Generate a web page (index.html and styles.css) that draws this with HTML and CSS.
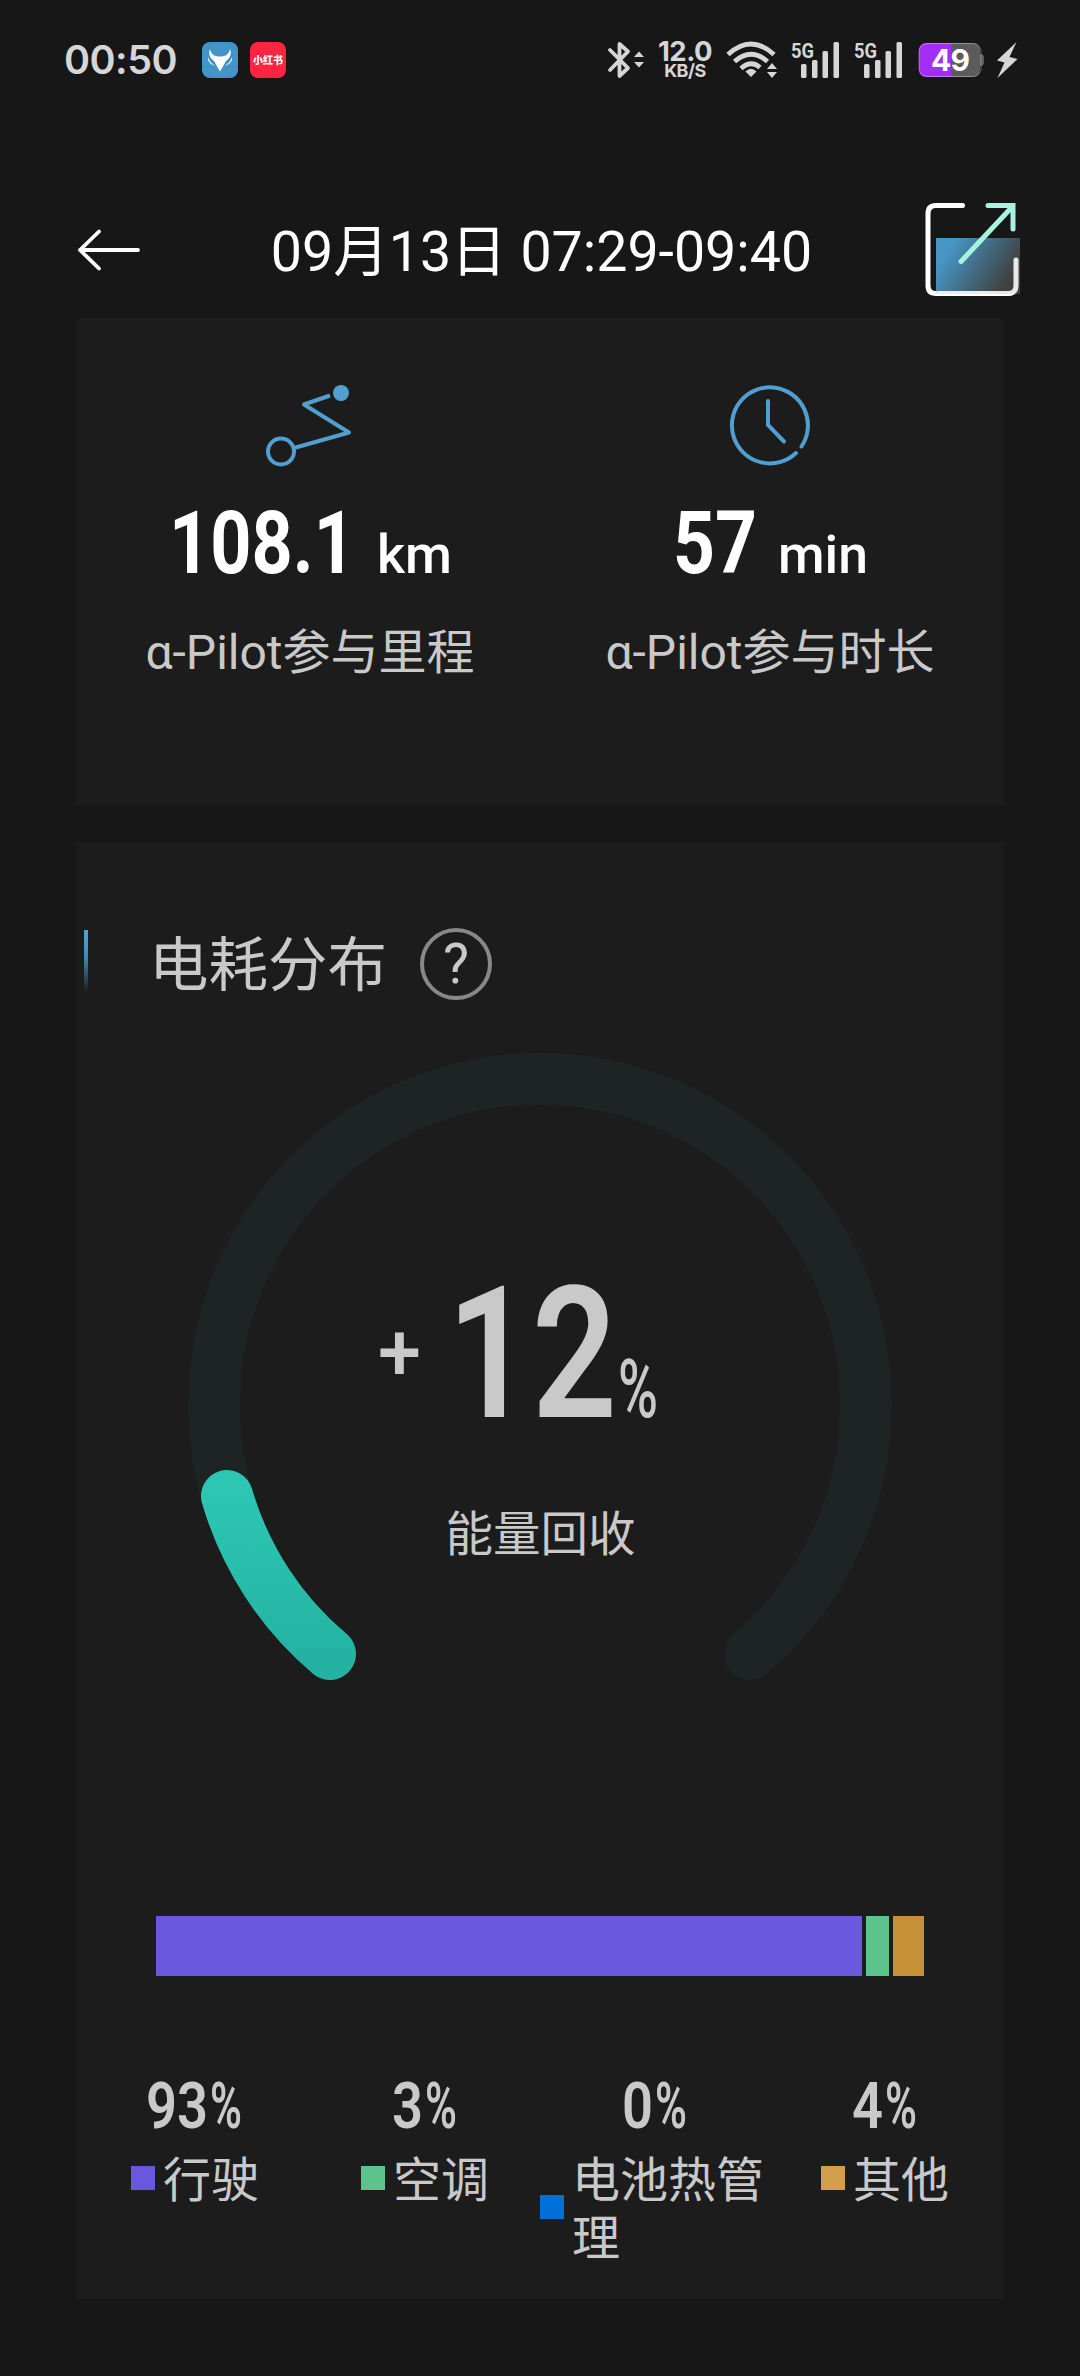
FILE: index.html
```html
<!DOCTYPE html>
<html lang="zh-CN">
<head>
<meta charset="utf-8">
<title>行程能耗</title>
<link rel="stylesheet" href="styles.css">
</head>
<body>
<div class="screen">
  <div class="status">
    <span class="clock">00:50</span>
    <svg class="app-icon" width="36" height="36" viewBox="0 0 36 36">
      <rect width="36" height="36" rx="8" fill="#4394c8"/>
      <path d="M8 7C9 12 12 14.500 18 14.500C24 14.500 27 12 28 7C30 12 28 16 24 19L18 29.500L12 19C8 16 6 12 8 7Z" fill="#fff"/>
      <path d="M6 15Q7 20 13 23.500Q8 22.500 6 18ZM30 15Q29 20 23 23.500Q28 22.500 30 18Z" fill="#fff"/>
    </svg>
    <span class="app-icon red">小红书</span>
    <div class="status-right">
      <svg class="bt" width="38" height="40" viewBox="0 0 38 40" fill="none" stroke="#d6d6d6" stroke-width="3.800" stroke-linejoin="round" stroke-linecap="round">
        <path d="M3 10L21 28L12.500 36V4L21 11.500L3 30"/>
        <path d="M27 17L32 11.500L37 17ZM27 22L32 27.500L37 22Z" fill="#d6d6d6" stroke="none"/>
      </svg>
      <span class="speed"><b>12.0</b><small>KB/S</small></span>
      <svg class="wifi" width="52" height="38" viewBox="0 0 52 38" fill="none" stroke="#d6d6d6" stroke-width="4.800">
        <path d="M2 13.500Q25 -7.500 48 13.500M8.500 20.500Q25 6 41.500 20.500M15 27.500Q25 18.500 34 26.500"/>
        <path d="M25 36L19.500 30.500Q25 25 30.500 30.500ZM41 28L46 22L51 28ZM41 31L46 37L51 31Z" fill="#d6d6d6" stroke="none"/>
      </svg>
      <svg class="signal" width="50" height="38" viewBox="0 0 50 38" fill="#d6d6d6">
        <text class="net" x="0" y="16.500" textLength="23" lengthAdjust="spacingAndGlyphs">5G</text>
        <rect x="10" y="23" width="5.500" height="14" rx="1.500"/><rect x="21" y="19" width="5.500" height="18" rx="1.500"/><rect x="31.500" y="10" width="5.500" height="27" rx="1.500"/><rect x="42.500" y="1" width="5.500" height="36" rx="1.500"/>
      </svg>
      <svg class="signal" width="50" height="38" viewBox="0 0 50 38" fill="#d6d6d6">
        <text class="net" x="0" y="16.500" textLength="23" lengthAdjust="spacingAndGlyphs">5G</text>
        <rect x="10" y="23" width="5.500" height="14" rx="1.500"/><rect x="21" y="19" width="5.500" height="18" rx="1.500"/><rect x="31.500" y="10" width="5.500" height="27" rx="1.500"/><rect x="42.500" y="1" width="5.500" height="36" rx="1.500"/>
      </svg>
      <svg class="battery" width="66" height="36" viewBox="0 0 66 36">
        <path d="M9 1H33V35H9Q1 35 1 27V9Q1 1 9 1Z" fill="#a52df8"/>
        <path d="M33 1H54Q62 1 62 9V27Q62 35 54 35H33ZM62 12Q66 12 66 15V21Q66 24 62 24Z" fill="#5b5b5b"/>
        <rect x="1" y="1.500" width="62" height="33" rx="8" fill="none" stroke="#fff" stroke-opacity=".35"/>
        <text class="charge" x="32" y="29" text-anchor="middle">49</text>
      </svg>
      <svg class="bolt" width="22" height="38" viewBox="0 0 22 38"><path d="M20.500 1L1 19.500L8.500 21.500L1.500 37L21.500 18L13.500 16Z" fill="#d6d6d6"/></svg>
    </div>
  </div>

  <div class="header">
    <svg class="back" width="64" height="44" viewBox="0 0 64 44" fill="none" stroke="#fff" stroke-width="3.800" stroke-linecap="round" stroke-linejoin="round"><path d="M61 22H3M22 3.500L3 22L22 40.500"/></svg>
    <h1>09月13日 07:29-09:40</h1>
    <svg class="share" width="96" height="94" viewBox="0 0 96 94" fill="none" stroke-width="5" stroke-linecap="round">
      <defs><linearGradient id="share-fill" x1="0" y1=".3" x2="1" y2=".7"><stop offset=".1" stop-color="#489aca"/><stop offset=".9" stop-color="#424242"/></linearGradient></defs>
      <path d="M37.500 2.500H11Q3 2.500 3 10.500V82.500Q3 90.500 11 90.500H83Q91 90.500 91 82.500V57" stroke="#fff"/>
      <rect x="11" y="35" width="84" height="56" fill="url(#share-fill)" fill-opacity=".96"/>
      <path d="M13 90.500H83Q91 90.500 91 82.500V57" stroke="#fff" stroke-opacity=".88"/>
      <path d="M63 2.500H88V26M87 4L36 58.500" stroke="#a6f3df"/>
    </svg>
  </div>

  <section class="card pilot">
    <div class="metric">
      <svg width="90" height="86" viewBox="0 0 90 86" fill="none" stroke="#509fd0" stroke-width="4">
        <circle cx="16" cy="67.500" r="13"/><path d="M29 64L84 48.500L39 20.500L65 11.500" stroke-linejoin="round"/><circle cx="76" cy="9" r="8" fill="#509fd0" stroke="none"/>
      </svg>
      <svg class="value" width="460" height="90" viewBox="0 0 460 90">
        <text class="din" x="89" y="79" textLength="186" lengthAdjust="spacingAndGlyphs">108.1</text>
        <text class="unit" x="297" y="79" textLength="75" lengthAdjust="spacingAndGlyphs">km</text>
      </svg>
      <span class="label">α-Pilot参与里程</span>
    </div>
    <div class="metric">
      <svg width="90" height="86" viewBox="0 0 90 86" fill="none" stroke="#509fd0" stroke-width="4" stroke-linecap="round">
        <path d="M76.500 62.500A38 38 0 1 0 71 69"/><path d="M43 17V41L59 57.500"/>
      </svg>
      <svg class="value" width="460" height="90" viewBox="0 0 460 90">
        <text class="din" x="133" y="79" textLength="84" lengthAdjust="spacingAndGlyphs">57</text>
        <text class="unit" x="238" y="79" textLength="90" lengthAdjust="spacingAndGlyphs">min</text>
      </svg>
      <span class="label">α-Pilot参与时长</span>
    </div>
  </section>

  <section class="card energy">
    <div class="section-title">
      <i class="tick"></i>
      <h2>电耗分布</h2>
      <span class="help">?</span>
    </div>
    <svg class="gauge" width="720" height="660" viewBox="180 1040 720 660" fill="none" stroke-linecap="round" stroke-width="52">
      <defs><linearGradient id="arc" x1="0" y1="0" x2="0" y2="1"><stop stop-color="#2cc6b3"/><stop offset="1" stop-color="#24b3a3"/></linearGradient></defs>
      <path d="M330 1654A326 326 0 1 1 750 1654" stroke="#1d2423"/>
      <path d="M330 1654A326 326 0 0 1 227 1496" stroke="url(#arc)"/>
      <g fill="#c9c9c9" stroke="none">
        <text class="plus" x="378" y="1380" textLength="43" lengthAdjust="spacingAndGlyphs">+</text>
        <text class="big" x="447" y="1417" textLength="170" lengthAdjust="spacingAndGlyphs">12</text>
        <text class="percent" x="618" y="1417" textLength="40" lengthAdjust="spacingAndGlyphs">%</text>
        <text class="caption" x="540.500" y="1551" text-anchor="middle">能量回收</text>
      </g>
    </svg>
    <div class="bar"><i class="drive" style="width:706px"></i><i class="air" style="width:23px"></i><i class="other" style="width:31px"></i></div>
    <div class="legend">
      <div class="item">
        <svg width="230" height="64" viewBox="0 0 230 64"><text class="pct" x="66" y="56" textLength="62" lengthAdjust="spacingAndGlyphs">93</text><text class="sign" x="130" y="56" textLength="32" lengthAdjust="spacingAndGlyphs">%</text></svg>
        <div class="name"><i class="drive"></i><span>行驶</span></div>
      </div>
      <div class="item">
        <svg width="230" height="64" viewBox="0 0 230 64"><text class="pct" x="82" y="56" textLength="31" lengthAdjust="spacingAndGlyphs">3</text><text class="sign" x="115" y="56" textLength="32" lengthAdjust="spacingAndGlyphs">%</text></svg>
        <div class="name"><i class="air"></i><span>空调</span></div>
      </div>
      <div class="item">
        <svg width="230" height="64" viewBox="0 0 230 64"><text class="pct" x="82" y="56" textLength="31" lengthAdjust="spacingAndGlyphs">0</text><text class="sign" x="115" y="56" textLength="32" lengthAdjust="spacingAndGlyphs">%</text></svg>
        <div class="name"><i class="thermal"></i><span>电池热管理</span></div>
      </div>
      <div class="item">
        <svg width="230" height="64" viewBox="0 0 230 64"><text class="pct" x="82" y="56" textLength="31" lengthAdjust="spacingAndGlyphs">4</text><text class="sign" x="115" y="56" textLength="32" lengthAdjust="spacingAndGlyphs">%</text></svg>
        <div class="name"><i class="rest"></i><span>其他</span></div>
      </div>
    </div>
  </section>
</div>
</body>
</html>
```
FILE: styles.css
```css
* { box-sizing: border-box; }
body { margin: 0; background: #171717; }
svg { display: block; flex: none; overflow: visible; }
h1, h2 { margin: 0; font-weight: 400; }

.screen {
  width: 1080px;
  height: 2376px;
  overflow: hidden;
  background: #171717;
  color: #c9c9c9;
  font-family: Roboto, "Noto Sans CJK SC", sans-serif;
}

/* status bar */
.status {
  display: flex;
  align-items: center;
  height: 120px;
  padding-left: 64px;
}
.clock {
  width: 138px;
  color: #d6d6d6;
  font: 600 39.500px/40px Inter, sans-serif;
  letter-spacing: -0.500px;
}
.app-icon { width: 36px; height: 36px; flex: none; }
.app-icon.red {
  margin-left: 12px;
  border-radius: 8px;
  background: #fe2442;
  color: #fff;
  font: 900 10px/36px "Noto Sans CJK SC", sans-serif;
  text-align: center;
  white-space: nowrap;
}
.status-right {
  display: flex;
  align-items: center;
  margin-left: 321px;
}
.speed {
  display: flex;
  flex-direction: column;
  align-items: center;
  width: 54px;
  margin-left: 13px;
  color: #d6d6d6;
  font-family: Inter, sans-serif;
  white-space: nowrap;
}
.speed b { font-size: 27.500px; line-height: 21px; font-weight: 700; letter-spacing: -0.500px; }
.speed small { font-size: 18px; line-height: 18px; font-weight: 700; letter-spacing: -0.500px; }
.wifi { margin-left: 14px; }
.signal { margin-left: 13px; }
.net { font: 700 21px Roboto, sans-serif; }
.battery { margin-left: 14px; }
.charge { font: 700 30px Inter, sans-serif; fill: #fff; letter-spacing: -1px; }
.bolt { margin-left: 12px; }

/* page header */
.header {
  display: flex;
  align-items: flex-end;
  height: 198px;
  padding: 0 59px 16px 77px;
}
.header h1 {
  flex: 1;
  margin-bottom: 9px;
  padding-left: 17px;
  color: #fff;
  font-size: 55.500px;
  line-height: 80px;
  text-align: center;
  white-space: nowrap;
}
.back { margin-bottom: 30px; }
.share { margin-bottom: 5px; }

/* cards */
.card {
  width: 928px;
  margin: 0 auto;
  padding: 0 4px;
  background: #1c1c1c;
}
.pilot {
  display: grid;
  grid-template-columns: 1fr 1fr;
  height: 487px;
}
.metric {
  display: flex;
  flex-direction: column;
  align-items: center;
  padding-top: 66px;
}
.value { margin-top: 24px; fill: #fff; }
.din { font: 700 88px Roboto, sans-serif; }
.unit { font: 500 54px Roboto, sans-serif; }
.label { margin-top: 34px; font-size: 48px; line-height: 70px; white-space: nowrap; }

.energy { height: 1457px; margin-top: 37px; }
.section-title {
  display: flex;
  align-items: center;
  height: 198px;
  padding: 46px 0 0 4px;
}
.tick {
  width: 4px;
  height: 62px;
  margin-bottom: 6px;
  background: linear-gradient(#53a5d6, #4088b3 45%, #1c1c1c);
}
.section-title h2 {
  width: 240px;
  margin: 4px 0 0 61px;
  font-size: 59.500px;
  line-height: 80px;
  white-space: nowrap;
}
.help {
  width: 72px;
  height: 72px;
  margin-left: 31px;
  border: 4px solid #888;
  border-radius: 50%;
  font-size: 55px;
  line-height: 64px;
  text-align: center;
}
.gauge { margin: 0 auto; }
.plus { font: 500 80px Roboto, sans-serif; }
.big { font: 600 184px Roboto, sans-serif; }
.percent { font: 500 81px Roboto, sans-serif; }
.caption { font: 400 47.500px "Noto Sans CJK SC", sans-serif; }

.bar {
  display: flex;
  gap: 4px;
  width: 768px;
  height: 60px;
  margin: 216px auto 0;
}
.drive { background: #6957de; }
.air { background: #5cc38c; }
.thermal { background: #0070d8; }
.other { background: #c69036; }
.rest { background: #d2a04b; }

.legend {
  display: grid;
  grid-template-columns: repeat(4, 230px);
  margin-top: 96px;
}
.pct, .sign { font: 600 65px Roboto, sans-serif; fill: #c9c9c9; }
.name {
  display: flex;
  align-items: center;
  justify-content: center;
  gap: 8px;
  margin-top: 10px;
}
.name i { width: 24px; height: 24px; flex: none; }
.name span { margin-top: 6px; font-size: 48px; line-height: 58px; }
```
